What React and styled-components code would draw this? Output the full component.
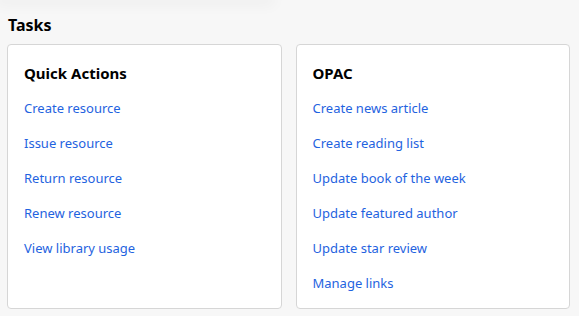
import React from 'react';
import styled, { createGlobalStyle } from "styled-components";

const GlobalStyle = createGlobalStyle`
  body {
    margin: 0;
    background: #f7f7f7;
    font-family: "Noto Sans", "Open Sans", sans-serif;
  }
`;

const Page = styled.div`
  padding: 0 9px 0 7px;
`;

const ShadowEdge = styled.div`
  width: 270px;
  height: 0;
  box-shadow: 0 0 14px 5px rgba(0, 0, 0, 0.045);
`;

const Heading = styled.h2`
  margin: 0;
  padding: 14px 0 0 1px;
  height: 30px;
  font-size: 16px;
  font-weight: 700;
  line-height: 22px;
  color: #000;
`;

const Grid = styled.div`
  display: grid;
  grid-template-columns: 1fr 1fr;
  gap: 14px;
`;

const Card = styled.section`
  background: #fff;
  border: 1px solid #d6d6d6;
  border-radius: 4px;
  padding: 17px 16px 14px;
  height: 265px;
  box-sizing: border-box;
`;

const CardTitle = styled.h3`
  margin: 0 0 15px;
  font-size: 15px;
  font-weight: 700;
  line-height: 22px;
  color: #000;
`;

const LinkList = styled.ul`
  list-style: none;
  margin: 0;
  padding: 0;
  display: flex;
  flex-direction: column;
  gap: 16px;
`;

const Link = styled.a`
  display: block;
  font-size: 13px;
  line-height: 19px;
  color: #1f63e0;
  text-decoration: none;
`;

const quick = ["Create resource", "Issue resource", "Return resource", "Renew resource", "View library usage"];
const opac = ["Create news article", "Create reading list", "Update book of the week", "Update featured author", "Update star review", "Manage links"];

const TaskCard = ({ title, links }) => (
  <Card>
    <CardTitle>{title}</CardTitle>
    <LinkList>
      {links.map((l) => (
        <li key={l}><Link href="#">{l}</Link></li>
      ))}
    </LinkList>
  </Card>
);

export default function App() {
  return (
    <>
      <GlobalStyle />
      <ShadowEdge />
      <Page>
        <Heading>Tasks</Heading>
        <Grid>
          <TaskCard title="Quick Actions" links={quick} />
          <TaskCard title="OPAC" links={opac} />
        </Grid>
      </Page>
    </>
  );
}
